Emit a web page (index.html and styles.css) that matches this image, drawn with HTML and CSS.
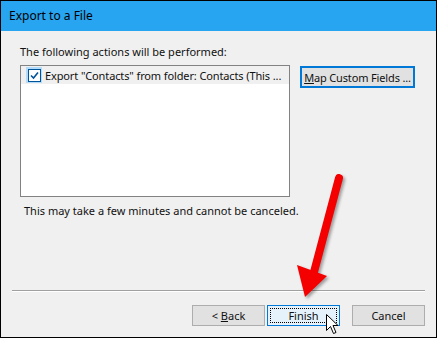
FILE: index.html
```html
<!DOCTYPE html>
<html lang="en">
<head>
  <meta charset="UTF-8">
  <title>Export to a File</title>
  <link rel="stylesheet" href="styles.css">
</head>
<body>
  <div class="window">
    <div class="titlebar">Export to a File</div>

    <div class="content">
      <p class="label">The following actions will be performed:</p>
      <div class="actions-row">
        <div class="listbox">
          <div class="list-item">
            <span class="checkbox">
              <svg width="13" height="13" viewBox="0 0 13 13">
                <rect x="0.5" y="0.5" width="12" height="12" fill="#fff" stroke="#005499"/>
                <path d="M3 6.5 L5.5 9 L10 3.5" fill="none" stroke="#005499" stroke-width="1.6"/>
              </svg>
            </span>
            <span>Export "Contacts" from folder: Contacts (This ...</span>
          </div>
        </div>
        <button class="btn btn-map"><u>M</u>ap Custom Fields ...</button>
      </div>
      <p class="note">This may take a few minutes and cannot be canceled.</p>
    </div>

    <div class="footer">
      <hr class="separator">
      <div class="buttons">
        <button class="btn">&lt; <u>B</u>ack</button>
        <button class="btn btn-default"><span class="focus-ring">Finish</span></button>
        <button class="btn btn-cancel">Cancel</button>
      </div>
    </div>

    <!-- annotation arrow drawn over the dialog -->
    <svg class="annotation" width="437" height="338" viewBox="0 0 437 338">
      <g class="arrow">
        <line x1="339" y1="178" x2="314" y2="272" stroke="#f40000" stroke-width="8" stroke-linecap="round"/>
        <polygon points="305,297 297,265 327,276" fill="#f40000"/>
      </g>
    </svg>

    <svg class="cursor" width="14" height="21" viewBox="0 0 14 21">
      <path d="M0.5 0.5 L0.5 16.5 L4.5 12.5 L7.5 19.5 L10 18.5 L7 11.5 L12 11.5 Z" fill="#fff" stroke="#000" stroke-width="1"/>
    </svg>
  </div>
</body>
</html>
```

FILE: styles.css
```css
body {
  margin: 0;
  padding: 0;
  font-family: "Segoe UI", "Noto Sans", sans-serif;
  font-size: 11px;
  color: #111;
}

.window {
  position: relative;
  width: 437px;
  height: 338px;
  box-sizing: border-box;
  border: 1px solid #000;
  background-color: #f0f0f0;
  display: flex;
  flex-direction: column;
  overflow: hidden;
}

.titlebar {
  height: 30px;
  line-height: 30px;
  padding-left: 8px;
  background-color: #28a5f0;
  font-size: 12px;
  color: #000;
}

.content {
  padding: 13px 20px 0 19px;
}

.label {
  margin: 0;
  line-height: 16px;
}

.actions-row {
  display: flex;
  align-items: flex-start;
  gap: 10px;
  margin-top: 5px;
}

.listbox {
  width: 270px;
  height: 132px;
  box-sizing: border-box;
  border: 1px solid #828282;
  background-color: #fff;
}

.list-item {
  display: flex;
  align-items: center;
  gap: 3px;
  height: 18px;
  padding-left: 5px;
  background-color: #f0f0f0;
  white-space: nowrap;
  letter-spacing: -0.12px;
}

.checkbox {
  display: flex;
  align-items: center;
  justify-content: center;
  width: 16px;
  height: 16px;
  background-color: #b3dcfb;
}

.checkbox svg {
  display: block;
}

.btn {
  height: 21px;
  width: 73px;
  padding: 0;
  box-sizing: border-box;
  border: 1px solid #adadad;
  background-color: #e1e1e1;
  font-family: inherit;
  font-size: 11px;
  color: #111;
}

.btn-map {
  width: 115px;
  height: 22px;
  margin-top: 1px;
  border: 2px solid #0078d7;
  white-space: nowrap;
  letter-spacing: -0.15px;
}

.note {
  margin: 6px 0 0 4px;
  line-height: 16px;
}

.footer {
  margin-top: auto;
  padding-bottom: 11px;
}

.separator {
  margin: 0 11px 0 11px;
  border: none;
  border-top: 1px solid #a0a0a0;
  border-bottom: 1px solid #fff;
}

.buttons {
  display: flex;
  justify-content: flex-end;
  gap: 2px;
  padding: 13px 11px 0 0;
}

.btn-default {
  border-color: #0078d7;
  background-color: #e5f1fb;
  padding: 2px;
}

.focus-ring {
  display: flex;
  align-items: center;
  justify-content: center;
  height: 100%;
  border: 1px dotted #000;
  box-sizing: border-box;
}

.btn-cancel {
  margin-left: 10px;
}

.annotation {
  position: absolute;
  left: -1px;
  top: -1px;
  pointer-events: none;
}

.arrow {
  filter: drop-shadow(2px 2px 1.5px rgba(0, 0, 0, 0.35));
}

.cursor {
  position: absolute;
  left: 325px;
  top: 313px;
}
```
